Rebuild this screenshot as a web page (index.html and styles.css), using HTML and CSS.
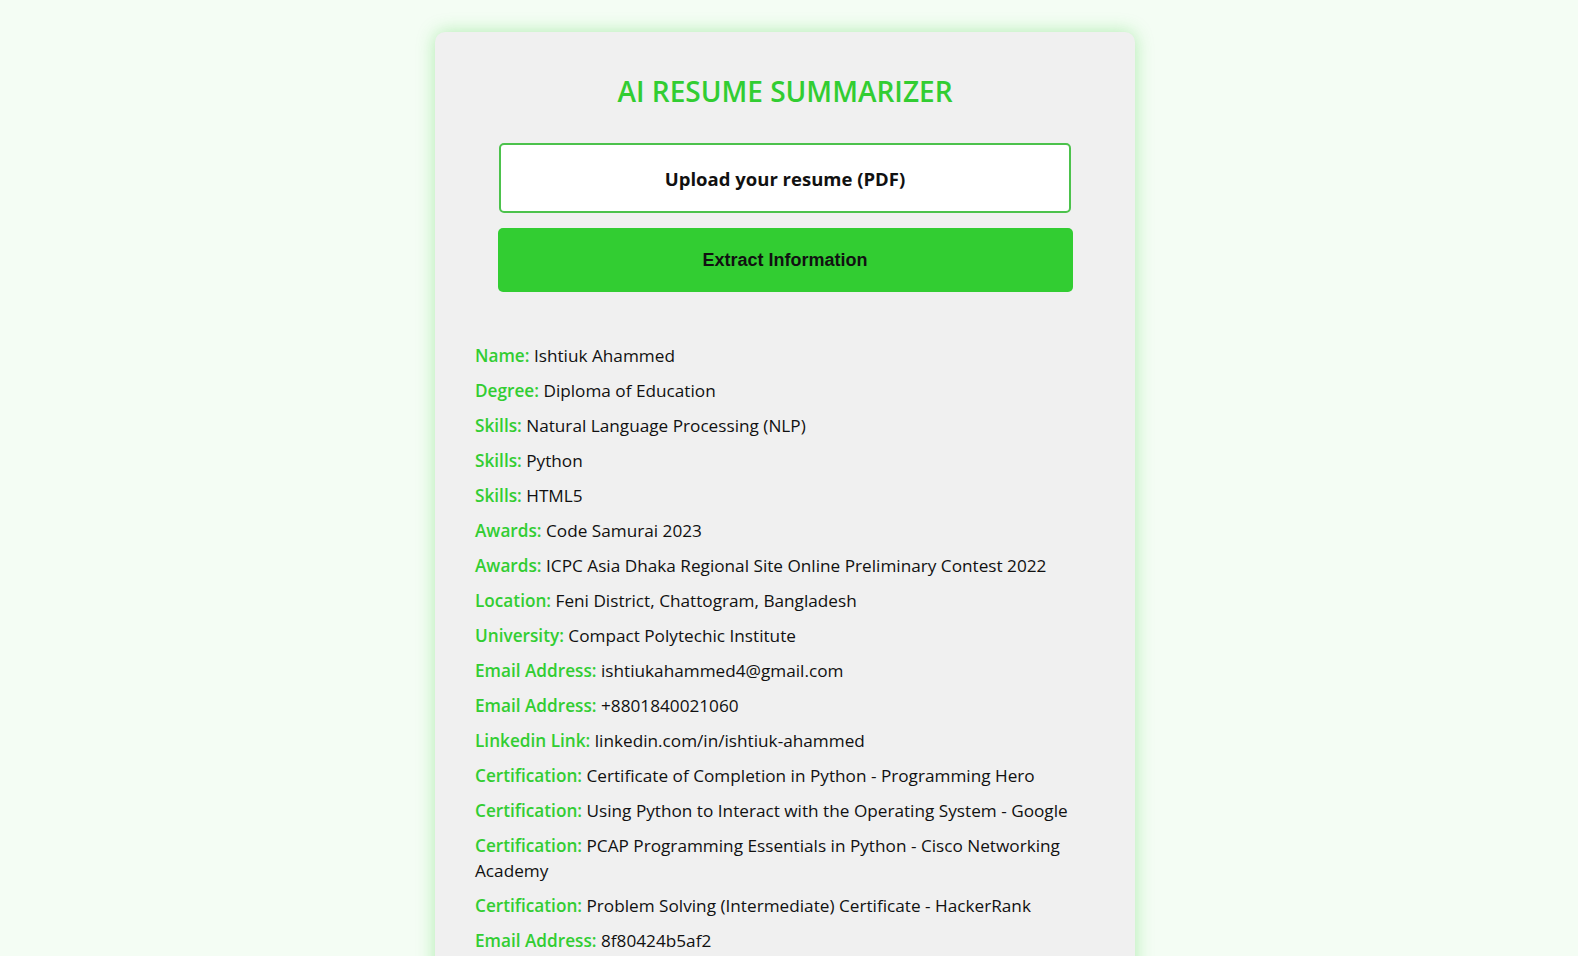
FILE: index.html
```html
<!DOCTYPE html>
<html lang="en">
<head>
<meta charset="utf-8">
<title>AI Resume Summarizer</title>
<link rel="stylesheet" href="styles.css">
</head>
<body>
<main class="card">
  <h1 class="title">AI RESUME SUMMARIZER</h1>
  <form class="form">
    <label class="upload">Upload your resume (PDF)</label>
    <button type="button" class="extract">Extract Information</button>
  </form>
  <ul class="results">
    <li><span class="key">Name:</span> Ishtiuk Ahammed</li>
    <li><span class="key">Degree:</span> Diploma of Education</li>
    <li><span class="key">Skills:</span> Natural Language Processing (NLP)</li>
    <li><span class="key">Skills:</span> Python</li>
    <li><span class="key">Skills:</span> HTML5</li>
    <li><span class="key">Awards:</span> Code Samurai 2023</li>
    <li><span class="key">Awards:</span> ICPC Asia Dhaka Regional Site Online Preliminary Contest 2022</li>
    <li><span class="key">Location:</span> Feni District, Chattogram, Bangladesh</li>
    <li><span class="key">University:</span> Compact Polytechic Institute</li>
    <li><span class="key">Email Address:</span> ishtiukahammed4@gmail.com</li>
    <li><span class="key">Email Address:</span> +8801840021060</li>
    <li><span class="key">Linkedin Link:</span> linkedin.com/in/ishtiuk-ahammed</li>
    <li><span class="key">Certification:</span> Certificate of Completion in Python - Programming Hero</li>
    <li><span class="key">Certification:</span> Using Python to Interact with the Operating System - Google</li>
    <li><span class="key">Certification:</span> PCAP Programming Essentials in Python - Cisco Networking Academy</li>
    <li><span class="key">Certification:</span> Problem Solving (Intermediate) Certificate - HackerRank</li>
    <li><span class="key">Email Address:</span> 8f80424b5af2</li>
  </ul>
</main>
</body>
</html>
```
FILE: styles.css
```css
* { box-sizing: border-box; }
html, body { margin: 0; }
body {
  background: #f4fdf4;
  font-family: "Open Sans", "Liberation Sans", sans-serif;
  color: #111;
  display: flex;
  justify-content: center;
  padding: 32px 8px 40px 0;
}
.card {
  width: 700px;
  background: #f0f0f0;
  border-radius: 10px;
  padding: 40px;
  box-shadow: 0 0 18px rgba(50, 205, 50, 0.35);
}
.title {
  margin: 0;
  text-align: center;
  color: #32cd32;
  font-size: 28px;
  font-weight: 600;
  line-height: 38px;
}
.form {
  display: flex;
  flex-direction: column;
  align-items: center;
  gap: 15px;
  margin-top: 33px;
}
.upload {
  width: 572px;
  height: 70px;
  display: flex;
  align-items: center;
  justify-content: center;
  background: #fff;
  border: 2px solid #4cc24c;
  border-radius: 5px;
  font-weight: 700;
  font-size: 18.5px;
  color: #111;
}
.extract {
  width: 575px;
  height: 64px;
  background: #32cd32;
  border: none;
  border-radius: 5px;
  font-family: "Liberation Sans", Arial, sans-serif;
  font-weight: 700;
  font-size: 18px;
  color: #111;
}
.results {
  list-style: none;
  margin: 51px 0 0;
  padding: 0;
}
.results li {
  font-size: 17.2px;
  line-height: 25px;
  margin-bottom: 10px;
}
.key {
  color: #32cd32;
  font-weight: 600;
}
```
